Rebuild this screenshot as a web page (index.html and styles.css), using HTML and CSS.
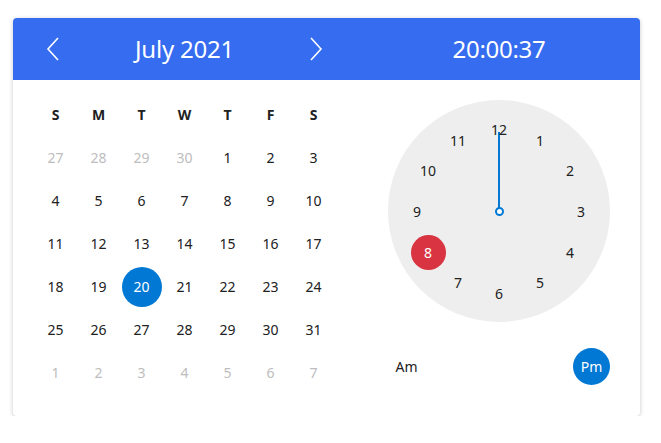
FILE: index.html
```html
<!DOCTYPE html>
<html>
<head>
<meta charset="utf-8">
<link rel="stylesheet" href="styles.css">
</head>
<body>
<div class="card">
  <div class="header">
    <div class="cal-head">
      <button class="nav"><svg width="14" height="24" viewBox="0 0 14 24"><path d="M12 1 L2 12 L12 23" fill="none" stroke="#fff" stroke-width="1.6"/></svg></button>
      <div class="title">July 2021</div>
      <button class="nav"><svg width="14" height="24" viewBox="0 0 14 24"><path d="M2 1 L12 12 L2 23" fill="none" stroke="#fff" stroke-width="1.6"/></svg></button>
    </div>
    <div class="time-head">20:00:37</div>
  </div>
  <div class="body">
    <div class="calendar">
      <div class="wd">S</div><div class="wd">M</div><div class="wd">T</div><div class="wd">W</div><div class="wd">T</div><div class="wd">F</div><div class="wd">S</div>
      <div class="d muted">27</div><div class="d muted">28</div><div class="d muted">29</div><div class="d muted">30</div><div class="d">1</div><div class="d">2</div><div class="d">3</div>
      <div class="d">4</div><div class="d">5</div><div class="d">6</div><div class="d">7</div><div class="d">8</div><div class="d">9</div><div class="d">10</div>
      <div class="d">11</div><div class="d">12</div><div class="d">13</div><div class="d">14</div><div class="d">15</div><div class="d">16</div><div class="d">17</div>
      <div class="d">18</div><div class="d">19</div><div class="d"><span class="sel">20</span></div><div class="d">21</div><div class="d">22</div><div class="d">23</div><div class="d">24</div>
      <div class="d">25</div><div class="d">26</div><div class="d">27</div><div class="d">28</div><div class="d">29</div><div class="d">30</div><div class="d">31</div>
      <div class="d muted">1</div><div class="d muted">2</div><div class="d muted">3</div><div class="d muted">4</div><div class="d muted">5</div><div class="d muted">6</div><div class="d muted">7</div>
    </div>
    <div class="timepane">
      <div class="clock">
        <div class="hand"></div>
        <div class="pivot"></div>
        <div class="num n1">1</div>
        <div class="num n2">2</div>
        <div class="num n3">3</div>
        <div class="num n4">4</div>
        <div class="num n5">5</div>
        <div class="num n6">6</div>
        <div class="num n7">7</div>
        <div class="num n8 active">8</div>
        <div class="num n9">9</div>
        <div class="num n10">10</div>
        <div class="num n11">11</div>
        <div class="num n12">12</div>
      </div>
      <div class="ampm">
        <div class="period">Am</div>
        <div class="period on">Pm</div>
      </div>
    </div>
  </div>
</div>
</body>
</html>
```

FILE: styles.css
```css
* { box-sizing: border-box; }
html, body { margin: 0; padding: 0; background: #fff; }
body {
  font-family: "Noto Sans", "Open Sans", sans-serif;
  color: #212121;
  padding: 18px 21px 0 13px;
}
.card {
  width: 627px;
  height: 398px;
  border-radius: 4px;
  background: #fff;
  box-shadow: 0 1px 4px rgba(0,0,0,0.22);
  overflow: hidden;
}
.header {
  height: 62px;
  background: #356cf0;
  color: #fff;
  display: flex;
  align-items: center;
}
.cal-head {
  width: 345px;
  padding: 0 35px 0 33px;
  display: flex;
  align-items: center;
  justify-content: space-between;
}
.nav {
  background: none;
  border: 0;
  padding: 0;
  width: 14px;
  height: 24px;
  display: flex;
}
.title {
  font-size: 24px;
  line-height: 30px;
  letter-spacing: -0.2px;
}
.time-head {
  flex: 1;
  text-align: center;
  font-size: 24px;
  line-height: 30px;
  letter-spacing: -0.3px;
}
.body {
  display: flex;
}
.calendar {
  width: 345px;
  padding: 13px 22px 0 21px;
  display: grid;
  grid-template-columns: repeat(7, 43px);
  grid-auto-rows: 43px;
}
.wd, .d {
  display: flex;
  align-items: center;
  justify-content: center;
  font-size: 14px;
}
.wd { font-weight: 700; font-size: 14px; }
.d.muted { color: #bdbdbd; }
.sel {
  width: 40px;
  height: 40px;
  border-radius: 50%;
  background: #0078d4;
  color: #fff;
  display: flex;
  align-items: center;
  justify-content: center;
}
.timepane {
  flex: 1;
  display: flex;
  flex-direction: column;
  align-items: center;
  padding-top: 20px;
}
.clock {
  position: relative;
  width: 222px;
  height: 222px;
  border-radius: 50%;
  background: #eeeeee;
}
.hand {
  position: absolute;
  left: 110px;
  top: 32px;
  width: 2px;
  height: 79px;
  background: #0078d4;
}
.pivot {
  position: absolute;
  left: 106.5px;
  top: 106.5px;
  width: 9px;
  height: 9px;
  border-radius: 50%;
  border: 2px solid #0078d4;
  background: #fff;
}
.num {
  position: absolute;
  width: 35px;
  height: 35px;
  margin: -17.5px 0 0 -17.5px;
  border-radius: 50%;
  display: flex;
  align-items: center;
  justify-content: center;
  font-size: 14px;
}
.num.active { background: #d93441; color: #fff; }
.n1 { left: 152px; top: 40px; }
.n2 { left: 182px; top: 70px; }
.n3 { left: 193px; top: 111px; }
.n4 { left: 182px; top: 152px; }
.n5 { left: 152px; top: 182px; }
.n6 { left: 111px; top: 193px; }
.n7 { left: 70px; top: 182px; }
.n8 { left: 40px; top: 152px; }
.n9 { left: 29px; top: 111px; }
.n10 { left: 40px; top: 70px; }
.n11 { left: 70px; top: 40px; }
.n12 { left: 111px; top: 29px; }
.ampm {
  width: 222px;
  margin-top: 26px;
  display: flex;
  justify-content: space-between;
}
.period {
  width: 37px;
  height: 37px;
  border-radius: 50%;
  display: flex;
  align-items: center;
  justify-content: center;
  font-size: 14px;
}
.period.on { background: #0078d4; color: #fff; }
```
